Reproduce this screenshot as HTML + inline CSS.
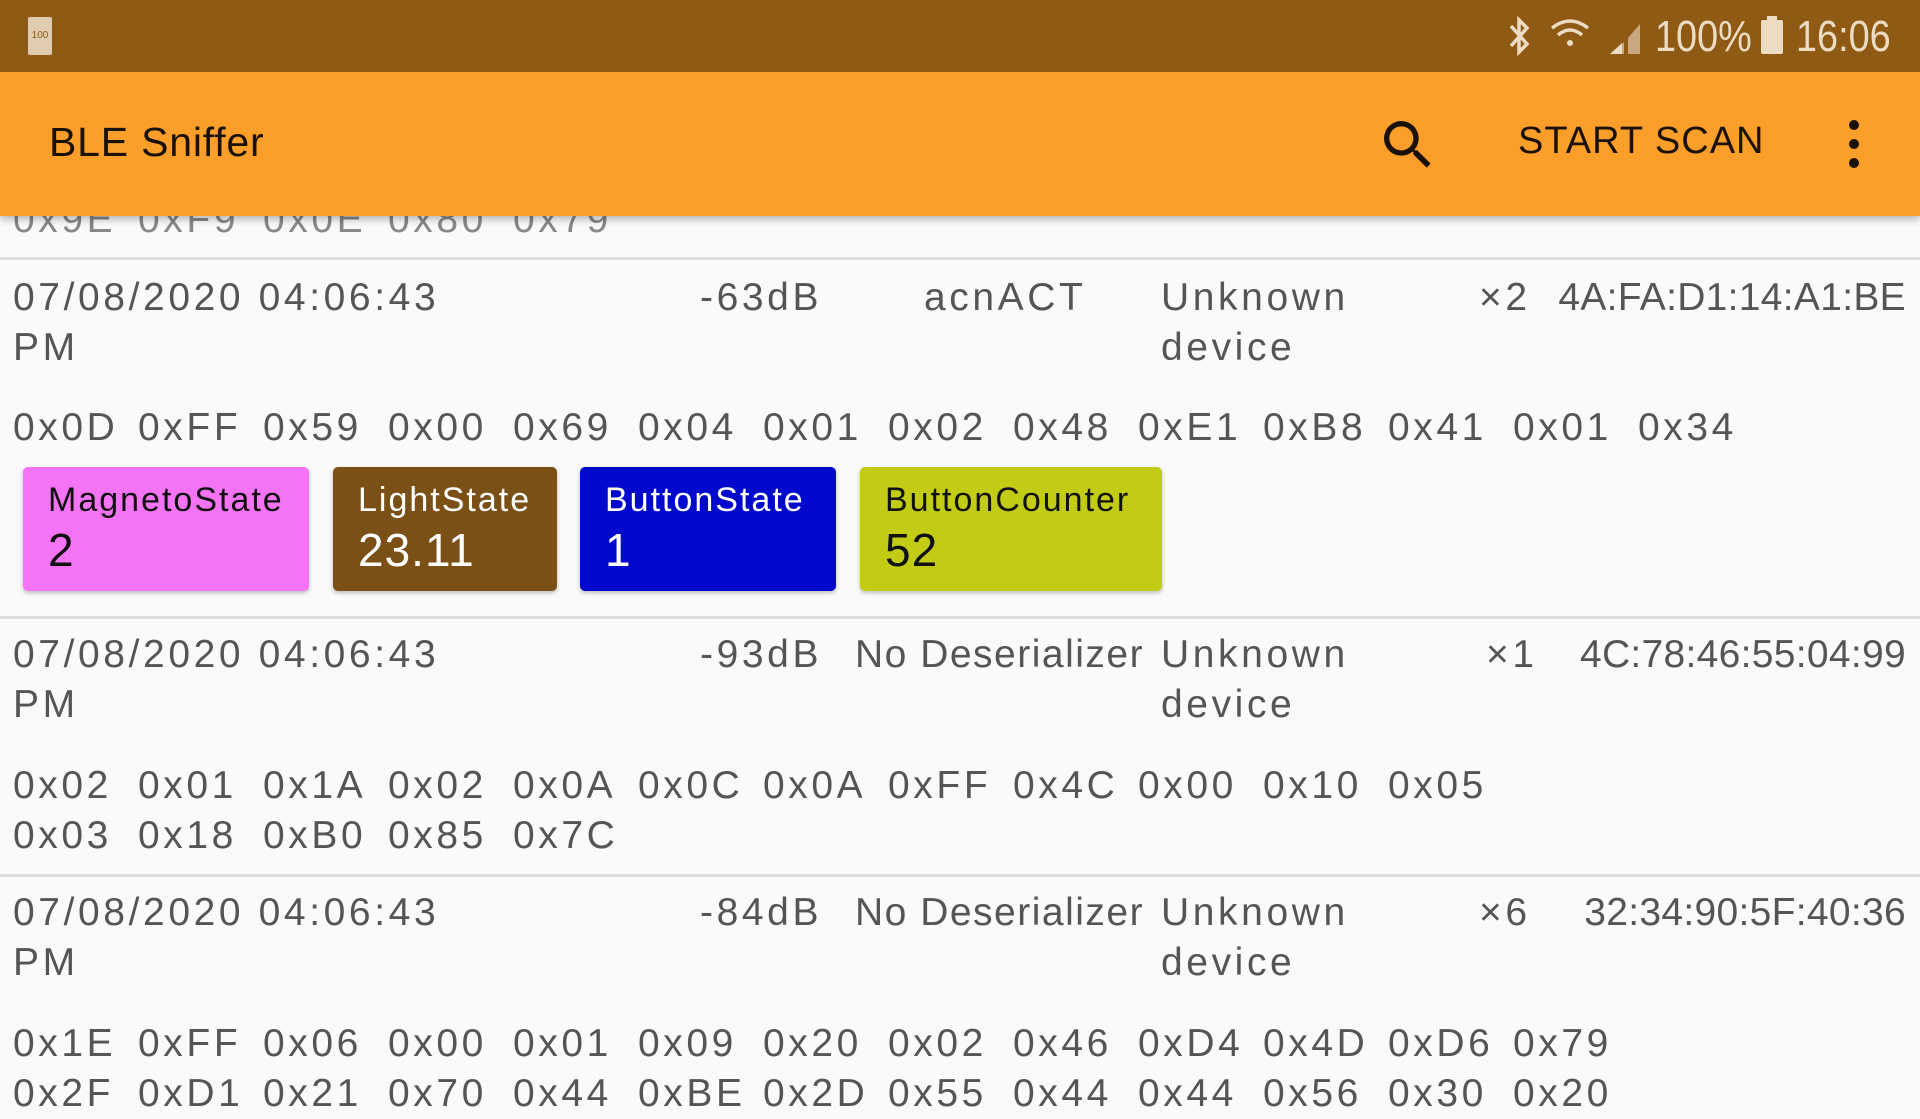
<!DOCTYPE html>
<html><head><meta charset="utf-8"><style>
body{margin:0;width:1920px;height:1080px;overflow:hidden;background:#fafafa;font-family:"Liberation Sans",sans-serif;position:relative}
.a{position:absolute;white-space:nowrap}
.t{font-size:39px;color:#555;line-height:50px;letter-spacing:3.6px}
.mac{letter-spacing:0.3px}
.hx span{display:inline-block;width:125px}
.hr{position:absolute;left:0;width:1920px;height:3px;background:#ddd}
.chip{position:absolute;top:467px;height:124px;border-radius:5px;box-shadow:0 2px 4px rgba(0,0,0,.25)}
.chip .l{position:absolute;left:25px;top:14px;font-size:34px;letter-spacing:2px}
.chip .v{position:absolute;left:25px;top:56px;font-size:46px;letter-spacing:1px}
.sn{font-family:'Liberation Sans Narrow','Liberation Sans',sans-serif;transform:scaleX(.86);transform-origin:left}
</style></head><body>
<div class="a t hx" style="left:13px;top:195px;color:#888"><span>0x9E</span><span>0xF9</span><span>0x0E</span><span>0x80</span><span>0x79</span></div>
<div class="hr" style="top:257px"></div>

<div class="a t" style="left:13px;top:273px">07/08/2020 04:06:43<br>PM</div>
<div class="a t" style="left:700px;top:273px">-63dB</div>
<div class="a t" style="left:924px;top:273px">acnACT</div>
<div class="a t" style="left:1161px;top:273px">Unknown<br>device</div>
<div class="a t" style="left:1479px;top:273px">×2</div>
<div class="a t mac" style="right:14px;top:273px">4A:FA:D1:14:A1:BE</div>
<div class="a t hx" style="left:13px;top:403px"><span>0x0D</span><span>0xFF</span><span>0x59</span><span>0x00</span><span>0x69</span><span>0x04</span><span>0x01</span><span>0x02</span><span>0x48</span><span>0xE1</span><span>0xB8</span><span>0x41</span><span>0x01</span><span>0x34</span></div>
<div class="chip" style="left:23px;width:286px;background:#f573f5;color:#111"><div class="l">MagnetoState</div><div class="v">2</div></div>
<div class="chip" style="left:333px;width:224px;background:#7a5016;color:#fff"><div class="l">LightState</div><div class="v">23.11</div></div>
<div class="chip" style="left:580px;width:256px;background:#0009cc;color:#fff"><div class="l">ButtonState</div><div class="v">1</div></div>
<div class="chip" style="left:860px;width:302px;background:#c2cc14;color:#111"><div class="l">ButtonCounter</div><div class="v">52</div></div>
<div class="hr" style="top:616px"></div>

<div class="a t" style="left:13px;top:630px">07/08/2020 04:06:43<br>PM</div>
<div class="a t" style="left:700px;top:630px">-93dB</div>
<div class="a t" style="left:855px;top:630px;letter-spacing:1.5px">No Deserializer</div>
<div class="a t" style="left:1161px;top:630px">Unknown<br>device</div>
<div class="a t" style="left:1486px;top:630px">×1</div>
<div class="a t mac" style="right:14px;top:630px">4C:78:46:55:04:99</div>
<div class="a t hx" style="left:13px;top:761px"><span>0x02</span><span>0x01</span><span>0x1A</span><span>0x02</span><span>0x0A</span><span>0x0C</span><span>0x0A</span><span>0xFF</span><span>0x4C</span><span>0x00</span><span>0x10</span><span>0x05</span><br><span>0x03</span><span>0x18</span><span>0xB0</span><span>0x85</span><span>0x7C</span></div>
<div class="hr" style="top:874px"></div>

<div class="a t" style="left:13px;top:888px">07/08/2020 04:06:43<br>PM</div>
<div class="a t" style="left:700px;top:888px">-84dB</div>
<div class="a t" style="left:855px;top:888px;letter-spacing:1.5px">No Deserializer</div>
<div class="a t" style="left:1161px;top:888px">Unknown<br>device</div>
<div class="a t" style="left:1479px;top:888px">×6</div>
<div class="a t mac" style="right:14px;top:888px">32:34:90:5F:40:36</div>
<div class="a t hx" style="left:13px;top:1019px"><span>0x1E</span><span>0xFF</span><span>0x06</span><span>0x00</span><span>0x01</span><span>0x09</span><span>0x20</span><span>0x02</span><span>0x46</span><span>0xD4</span><span>0x4D</span><span>0xD6</span><span>0x79</span><br><span>0x2F</span><span>0xD1</span><span>0x21</span><span>0x70</span><span>0x44</span><span>0xBE</span><span>0x2D</span><span>0x55</span><span>0x44</span><span>0x44</span><span>0x56</span><span>0x30</span><span>0x20</span></div>

<!-- app bar -->
<div class="a" style="left:0;top:71px;width:1920px;height:145px;background:#fb9e2a;box-shadow:0 3px 8px rgba(0,0,0,.3)">
 <div class="a" style="left:49px;top:48px;font-size:41px;letter-spacing:.8px;color:#1a1108">BLE Sniffer</div>
 <svg class="a" style="left:1376px;top:42px" width="64" height="64" viewBox="0 0 24 24"><path fill="#1a1108" d="M15.5 14h-.79l-.28-.27A6.47 6.47 0 0 0 16 9.5 6.5 6.5 0 1 0 9.5 16c1.61 0 3.09-.59 4.23-1.57l.27.28v.79l5 4.99L20.49 19l-4.99-5zm-6 0C7.01 14 5 11.99 5 9.5S7.01 5 9.5 5 14 7.01 14 9.5 11.990 14 9.5 14z"/></svg>
 <div class="a" style="left:1518px;top:49px;font-size:38px;letter-spacing:1px;color:#1a1108">START SCAN</div>
 <svg class="a" style="left:1846px;top:48px" width="16" height="50"><circle cx="8" cy="6" r="5" fill="#1a1108"/><circle cx="8" cy="25" r="5" fill="#1a1108"/><circle cx="8" cy="44" r="5" fill="#1a1108"/></svg>
</div>

<!-- status bar -->
<div class="a" style="left:0;top:0;width:1920px;height:72px;background:#8f5a14;color:#ecdcc4">
 <div class="a" style="left:28px;top:17px;width:24px;height:38px;background:#e0ccb0;border-radius:2px;font-size:10px;color:#8f5a14;text-align:center;line-height:38px">100</div>
 <svg class="a" style="left:1505px;top:16px" width="30" height="40" viewBox="0 0 30 40"><path d="M6 10 L22 28 L14 36 L14 4 L22 12 L6 30" fill="none" stroke="#ecdcc4" stroke-width="3.5"/></svg>
 <svg class="a" style="left:1548px;top:16px" width="100" height="40" viewBox="0 0 100 40"><path d="M4 12 Q22 -2 40 12" fill="none" stroke="#ecdcc4" stroke-width="3.5"/><path d="M10 19 Q22 9 34 19" fill="none" stroke="#ecdcc4" stroke-width="3.5"/><circle cx="22" cy="27" r="3" fill="#ecdcc4"/><path d="M64 38 L76 26 L76 38Z M80 22 L92 8 L92 38 L80 38Z" fill="#c9a880"/><path d="M62 38 L74 27 L74 38Z" fill="#ecdcc4"/></svg>
 <div class="a sn" style="left:1655px;top:12px;font-size:44px">100%</div>
 <div class="a" style="left:1761px;top:20px;width:22px;height:34px;background:#ecdcc4;border-radius:2px"></div>
 <div class="a" style="left:1767px;top:16px;width:10px;height:5px;background:#ecdcc4"></div>
 <div class="a sn" style="left:1796px;top:12px;font-size:44px">16:06</div>
</div>
</body></html>
